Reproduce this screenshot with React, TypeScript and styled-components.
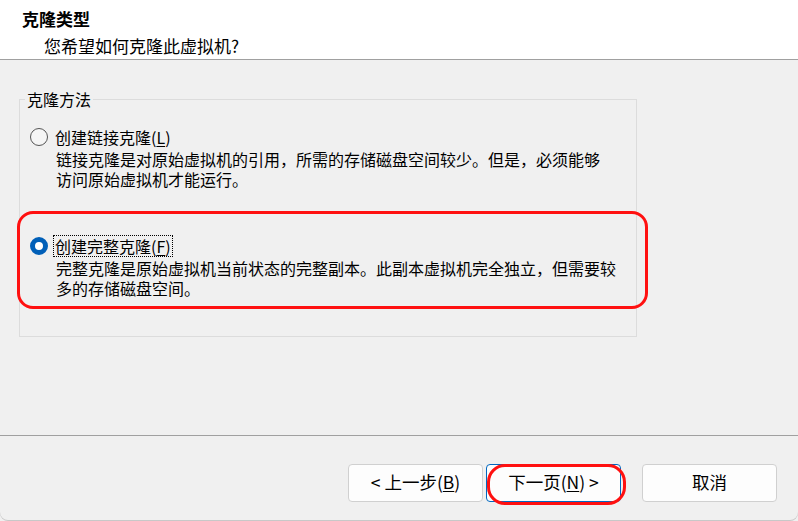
import React from "react";
import styled, { createGlobalStyle } from "styled-components";

const GlobalStyle = createGlobalStyle`
  html, body {
    margin: 0;
    padding: 0;
    background: #f0f0f0;
  }
  body {
    font-family: "Noto Sans CJK SC", "Noto Sans", sans-serif;
    color: #000;
  }
`;

const Window = styled.div`
  width: 798px;
  height: 521px;
  display: flex;
  flex-direction: column;
  background: #f0f0f0;
  overflow: hidden;
  border-radius: 0 0 8px 8px;
  box-shadow: inset 0 -1px 0 #c8c8c8;
`;

const Header = styled.header`
  flex: none;
  height: 60px;
  box-sizing: border-box;
  background: #ffffff;
  border-bottom: 1px solid #a0a0a0;
  padding: 8px 0 0 22px;
`;

const Title = styled.div`
  font-size: 17px;
  font-weight: 700;
  line-height: 22px;
`;

const Subtitle = styled.div`
  font-size: 17px;
  line-height: 22px;
  margin: 5px 0 0 22px;
`;

const Body = styled.main`
  flex: 1;
  padding: 29px 0 0 19px;
`;

const Group = styled.fieldset`
  width: 618px;
  height: 248px;
  box-sizing: border-box;
  margin: 0;
  padding: 18px 10px 0 10px;
  border: 1px solid #dcdcdc;
`;

const Legend = styled.legend`
  font-size: 16px;
  line-height: 20px;
  padding: 0 2px;
  margin-left: -5px;
`;

const Option = styled.div<{ $highlight?: boolean }>`
  position: relative;
  margin-top: ${(p) => (p.$highlight ? "47px" : "0")};

  ${(p) =>
    p.$highlight &&
    `
    &::before {
      content: "";
      position: absolute;
      left: -13px;
      top: -25px;
      width: 631px;
      height: 98px;
      border: 3px solid #ff1010;
      border-radius: 16px;
      box-sizing: border-box;
      pointer-events: none;
    }
  `}
`;

const OptionRow = styled.label`
  display: flex;
  align-items: center;
  gap: 5px;
  height: 20px;
`;

const Radio = styled.span<{ $checked?: boolean }>`
  width: 18px;
  height: 18px;
  flex: none;
  border-radius: 50%;
  box-sizing: border-box;
  border: ${(p) => (p.$checked ? "5.5px solid #005fb8" : "1px solid #555")};
  background: ${(p) => (p.$checked ? "#ffffff" : "#f5f5f5")};
`;

const OptionLabel = styled.span<{ $focused?: boolean }>`
  font-size: 16px;
  line-height: 20px;
  padding: 0 1px;
  border: 1px dotted ${(p) => (p.$focused ? "#000" : "transparent")};
`;

const Key = styled.span`
  text-decoration: underline;
  text-underline-offset: 2px;
`;

const Description = styled.p`
  margin: 2px 0 0 26px;
  font-size: 16px;
  line-height: 20px;
  white-space: nowrap;
`;

const Footer = styled.footer`
  height: 86px;
  flex: none;
  border-top: 1px solid #a0a0a0;
  box-sizing: border-box;
  display: flex;
  align-items: flex-start;
  justify-content: flex-end;
  padding: 28px 21px 0 0;
`;

const Button = styled.button<{ $default?: boolean; $gap?: number }>`
  position: relative;
  width: 135px;
  height: 38px;
  margin-left: ${(p) => p.$gap ?? 0}px;
  background: #fdfdfd;
  border: 1px solid ${(p) => (p.$default ? "#0067c0" : "#d0d0d0")};
  border-radius: 4px;
  font-family: "Noto Sans CJK SC", "Noto Sans", sans-serif;
  font-size: 17.5px;
  line-height: 22px;
  color: #000;
  padding: 0 0 2px;

  ${(p) =>
    p.$default &&
    `
    &::after {
      content: "";
      position: absolute;
      left: 0;
      top: -1px;
      width: 139px;
      height: 41px;
      border: 3px solid #ff1010;
      border-radius: 18px;
      box-sizing: border-box;
      pointer-events: none;
    }
  `}
`;

export default function App() {
  return (
    <Window>
      <GlobalStyle />
      <Header>
        <Title>克隆类型</Title>
        <Subtitle>您希望如何克隆此虚拟机?</Subtitle>
      </Header>
      <Body>
        <Group>
          <Legend>克隆方法</Legend>
          <Option>
            <OptionRow>
              <Radio />
              <OptionLabel>
                创建链接克隆(<Key>L</Key>)
              </OptionLabel>
            </OptionRow>
            <Description>
              链接克隆是对原始虚拟机的引用，所需的存储磁盘空间较少。但是，必须能够
              <br />
              访问原始虚拟机才能运行。
            </Description>
          </Option>
          <Option $highlight>
            <OptionRow>
              <Radio $checked />
              <OptionLabel $focused>
                创建完整克隆(<Key>F</Key>)
              </OptionLabel>
            </OptionRow>
            <Description>
              完整克隆是原始虚拟机当前状态的完整副本。此副本虚拟机完全独立，但需要较
              <br />
              多的存储磁盘空间。
            </Description>
          </Option>
        </Group>
      </Body>
      <Footer>
        <Button>
          &lt; 上一步(<Key>B</Key>)
        </Button>
        <Button $default $gap={3}>
          下一页(<Key>N</Key>) &gt;
        </Button>
        <Button $gap={21}>取消</Button>
      </Footer>
    </Window>
  );
}
